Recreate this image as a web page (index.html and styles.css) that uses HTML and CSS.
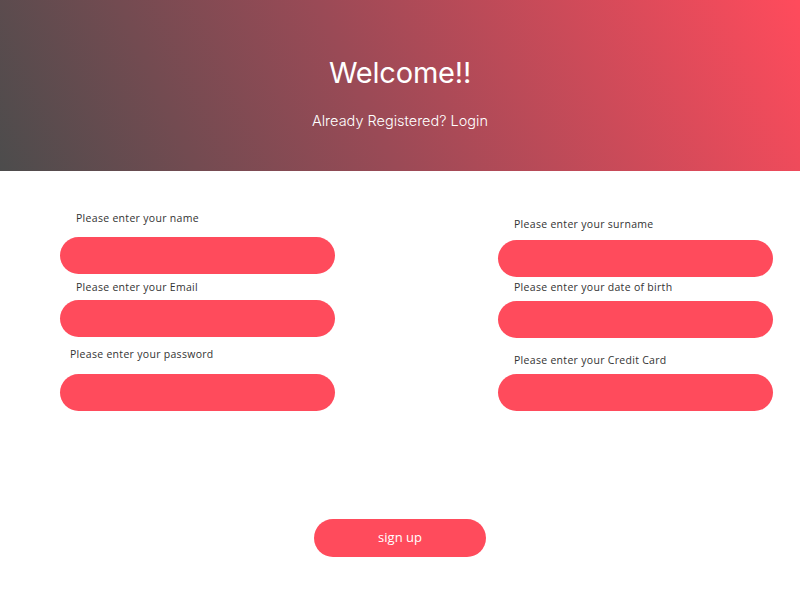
FILE: index.html
```html
<!DOCTYPE html>
<html>
<head>
<meta charset="utf-8">
<link rel="stylesheet" href="styles.css">
</head>
<body>
<header class="hero">
  <h1 class="hero-title">Welcome!!</h1>
  <p class="hero-sub">Already Registered? Login</p>
</header>
<main class="form">
  <div class="columns">
    <div class="col col-left">
      <div class="field f-l1">
        <label class="label">Please enter your name</label>
        <input class="input" type="text">
      </div>
      <div class="field f-l2">
        <label class="label">Please enter your Email</label>
        <input class="input" type="text">
      </div>
      <div class="field f-l3">
        <label class="label label-tight">Please enter your password</label>
        <input class="input" type="password">
      </div>
    </div>
    <div class="col col-right">
      <div class="field f-r1">
        <label class="label">Please enter your surname</label>
        <input class="input" type="text">
      </div>
      <div class="field f-r2">
        <label class="label">Please enter your date of birth</label>
        <input class="input" type="text">
      </div>
      <div class="field f-r3">
        <label class="label">Please enter your Credit Card</label>
        <input class="input" type="text">
      </div>
    </div>
  </div>
  <div class="actions">
    <button class="btn">sign up</button>
  </div>
</main>
</body>
</html>
```
FILE: styles.css
```css
* { box-sizing: border-box; }
html, body { margin: 0; padding: 0; background: #fff; }
body { font-family: "Open Sans", "Noto Sans", sans-serif; }

.hero {
  height: 171px;
  background: linear-gradient(65deg, #4c4c4c 0%, #9a4a56 45%, #ff4b5c 100%);
  display: flex;
  flex-direction: column;
  align-items: center;
  color: #fff;
  padding-top: 55px;
}
.hero-title {
  margin: 0;
  font-family: "Inter", sans-serif;
  font-weight: 400;
  font-size: 29px;
  line-height: 36px;
  letter-spacing: -0.2px;
}
.hero-sub {
  margin: 20px 0 0;
  font-family: "Inter", sans-serif;
  font-weight: 300;
  font-size: 14.5px;
  line-height: 20px;
}

.form { padding-top: 40px; }
.columns {
  display: flex;
  justify-content: space-between;
  padding: 0 27px 0 60px;
}
.col { width: 275px; display: flex; flex-direction: column; }
.col-right { padding-top: 6px; }

.field { display: flex; flex-direction: column; }
.label {
  display: block;
  font-size: 10.5px;
  line-height: 14px;
  letter-spacing: 0.3px;
  color: #333;
  padding-left: 16px;
}
.label-tight { padding-left: 10px; }
.input {
  display: block;
  width: 275px;
  height: 37px;
  border: none;
  border-radius: 19px;
  background: #ff4b5c;
  outline: none;
}

.f-l1 .input { margin-top: 12px; }
.f-l2 { margin-top: 6px; }
.f-l2 .input { margin-top: 6px; }
.f-l3 { margin-top: 10px; }
.f-l3 .input { margin-top: 13px; }

.f-r1 .input { margin-top: 9px; }
.f-r2 { margin-top: 3px; }
.f-r2 .input { margin-top: 7px; }
.f-r3 { margin-top: 15px; }
.f-r3 .input { margin-top: 7px; }

.actions {
  display: flex;
  justify-content: center;
  margin-top: 108px;
}
.btn {
  width: 172px;
  height: 38px;
  border: none;
  border-radius: 19px;
  background: #ff4b5c;
  color: #fff;
  font-family: "Open Sans", sans-serif;
  font-size: 13px;
  line-height: 16px;
  padding: 0 0 2px;
  cursor: pointer;
}
```
